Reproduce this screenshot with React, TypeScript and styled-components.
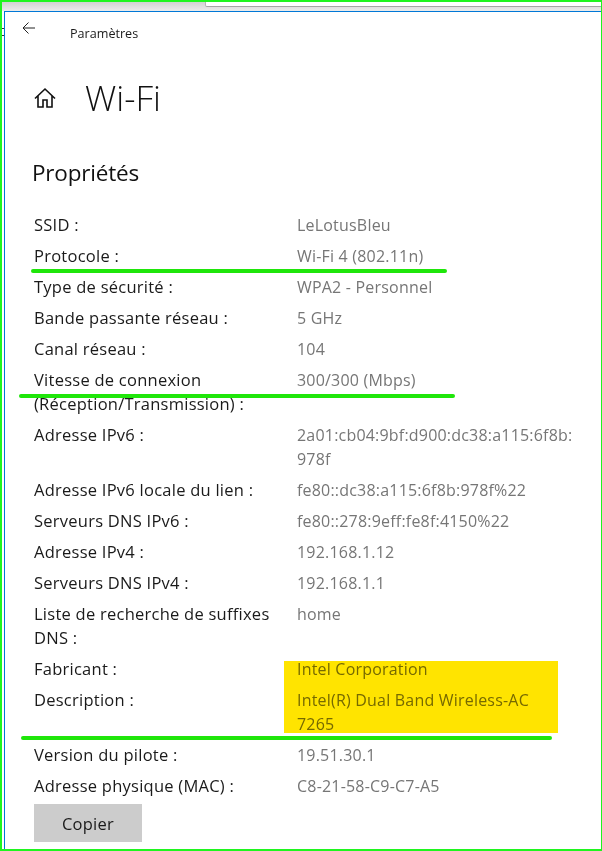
import React from 'react';
import styled, { createGlobalStyle } from 'styled-components';

const GlobalStyle = createGlobalStyle`
  html, body {
    margin: 0;
    padding: 0;
    background: #fff;
  }
  * {
    box-sizing: border-box;
  }
`;

const Frame = styled.div`
  position: relative;
  width: 602px;
  height: 851px;
  overflow: hidden;
  border: 2px solid #1ff51f;
  border-right-width: 1px;
  background: #fff;
  font-family: 'Open Sans', 'Noto Sans', sans-serif;
`;

const Chrome = styled.div`
  height: 9px;
  background: linear-gradient(#d2d2d2, #ececec);
`;

const Tab = styled.div`
  position: absolute;
  top: 0;
  left: 203px;
  right: 0;
  height: 5px;
  background: #fff;
  border-left: 1px solid #b5b5b5;
  border-bottom: 1px solid #a5a5a5;
  border-bottom-left-radius: 2px;
`;

const Ticks = styled.div`
  position: absolute;
  top: 26px;
  left: 0;
  width: 2px;
  height: 8px;
  border-top: 1px solid #333;
  border-bottom: 1px solid #333;
`;

const Window = styled.div`
  margin-left: 2px;
  height: 838px;
  border-top: 1px solid #0078d7;
  border-left: 1px solid #0078d7;
`;

const TitleBar = styled.div`
  display: flex;
  align-items: flex-start;
  height: 66px;
  padding: 9px 0 0 17px;
`;

const BackButton = styled.div`
  display: flex;
  width: 14px;
  height: 14px;
  color: #222;
`;

const AppName = styled.span`
  margin: 4px 0 0 34px;
  font-size: 12.6px;
  line-height: 17px;
  color: #1a1a1a;
`;

const PageHeader = styled.div`
  display: flex;
  align-items: center;
  height: 40px;
  padding-left: 29px;
`;

const HomeIcon = styled.div`
  display: flex;
  width: 22px;
  height: 22px;
  color: #111;
`;

const PageTitle = styled.h1`
  margin: 0 0 0 29px;
  font-size: 35px;
  font-weight: 300;
  line-height: 38px;
  color: #111;
`;

const SectionTitle = styled.h2`
  margin: 40px 0 25px 27px;
  font-size: 22.5px;
  font-weight: 400;
  line-height: 30px;
  letter-spacing: -0.2px;
  color: #111;
`;

const PropertyList = styled.dl`
  display: grid;
  grid-template-columns: 263px 276px;
  row-gap: 7px;
  margin: 0;
  padding-left: 29px;
  font-size: 16px;
  line-height: 24px;
`;

const Label = styled.dt`
  font-size: 16.5px;
  letter-spacing: 0.25px;
  color: #1a1a1a;
`;

const Value = styled.dd`
  margin: 0;
  letter-spacing: 0.2px;
  color: #767676;
  white-space: pre-line;
  overflow-wrap: anywhere;
`;

const CopyButton = styled.button`
  display: block;
  width: 108px;
  height: 38px;
  margin: 6px 0 0 29px;
  border: 0;
  background: #cccccc;
  font-family: inherit;
  font-size: 16.5px;
  letter-spacing: 0.25px;
  color: #1a1a1a;
`;

const Highlight = styled.div`
  position: absolute;
  top: 659px;
  left: 282px;
  width: 274px;
  height: 72px;
  background: #ffe400;
  mix-blend-mode: multiply;
`;

const Underline = styled.div<{ $top: number; $left: number; $width: number }>`
  position: absolute;
  top: ${(p) => p.$top}px;
  left: ${(p) => p.$left}px;
  width: ${(p) => p.$width}px;
  height: 4px;
  border-radius: 2px;
  background: #1fe60a;
`;

const PROPERTIES: [string, string][] = [
  ['SSID :', 'LeLotusBleu'],
  ['Protocole :', 'Wi-Fi 4 (802.11n)'],
  ['Type de sécurité :', 'WPA2 - Personnel'],
  ['Bande passante réseau :', '5 GHz'],
  ['Canal réseau :', '104'],
  ['Vitesse de connexion (Réception/Transmission) :', '300/300 (Mbps)'],
  ['Adresse IPv6 :', '2a01:cb04:9bf:d900:dc38:a115:6f8b:978f'],
  ['Adresse IPv6 locale du lien :', 'fe80::dc38:a115:6f8b:978f%22'],
  ['Serveurs DNS IPv6 :', 'fe80::278:9eff:fe8f:4150%22'],
  ['Adresse IPv4 :', '192.168.1.12'],
  ['Serveurs DNS IPv4 :', '192.168.1.1'],
  ['Liste de recherche de suffixes DNS :', 'home'],
  ['Fabricant :', 'Intel Corporation'],
  ['Description :', 'Intel(R) Dual Band Wireless-AC\n7265'],
  ['Version du pilote :', '19.51.30.1'],
  ['Adresse physique (MAC) :', 'C8-21-58-C9-C7-A5'],
];

const App: React.FC = () => (
  <Frame>
    <GlobalStyle />
    <Chrome />
    <Tab />
    <Ticks />
    <Window>
      <TitleBar>
        <BackButton>
          <svg viewBox="0 0 14 14" width="14" height="14" fill="none" stroke="currentColor" strokeWidth="1">
            <path d="M13 7H1.2M6.5 1.5L1 7l5.5 5.5" />
          </svg>
        </BackButton>
        <AppName>Paramètres</AppName>
      </TitleBar>
      <PageHeader>
        <HomeIcon>
          <svg viewBox="0 0 22 22" width="22" height="22" fill="none" stroke="currentColor" strokeWidth="1.6">
            <path d="M1 11.5L11 2l10 9.5M4 9v11h5v-7h4v7h5V9" />
          </svg>
        </HomeIcon>
        <PageTitle>Wi-Fi</PageTitle>
      </PageHeader>
      <SectionTitle>Propriétés</SectionTitle>
      <PropertyList>
        {PROPERTIES.map(([label, value]) => (
          <React.Fragment key={label}>
            <Label>{label}</Label>
            <Value>{value}</Value>
          </React.Fragment>
        ))}
      </PropertyList>
      <CopyButton>Copier</CopyButton>
    </Window>
    <Highlight />
    <Underline $top={267} $left={29} $width={416} />
    <Underline $top={392} $left={17} $width={436} />
    <Underline $top={734} $left={19} $width={531} />
  </Frame>
);

export default App;
